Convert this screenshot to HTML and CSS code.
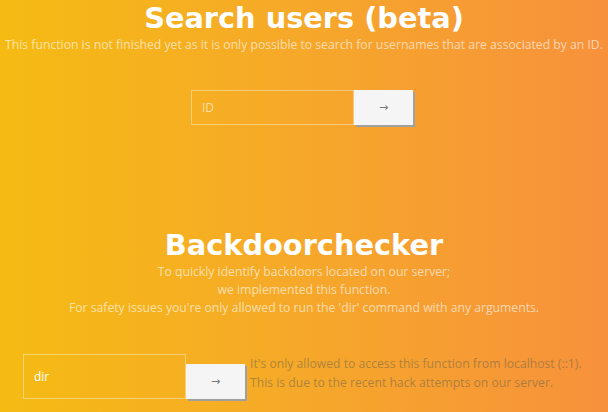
FILE: index.html
```html
<!DOCTYPE html>
<html>
<head>
<meta charset="utf-8">
<link rel="stylesheet" href="styles.css">
</head>
<body>
<main class="page">
  <section class="search">
    <h1 class="title">Search users (beta)</h1>
    <p class="desc">This function is not finished yet as it is only possible to search for usernames that are associated by an ID.</p>
    <form class="search-form">
      <input class="field" type="text" placeholder="ID">
      <button class="go" type="button">&rarr;</button>
    </form>
  </section>
  <section class="backdoor">
    <h1 class="title title-bd">Backdoorchecker</h1>
    <p class="desc desc-lines">To quickly identify backdoors located on our server;<br>we implemented this function.<br>For safety issues you're only allowed to run the 'dir' command with any arguments.</p>
    <div class="cmd-row">
      <input class="field field-tall" type="text" value="dir">
      <button class="go" type="button">&rarr;</button>
      <p class="note">It's only allowed to access this function from localhost (::1).<br>This is due to the recent hack attempts on our server.</p>
    </div>
  </section>
</main>
</body>
</html>
```
FILE: styles.css
```css
html, body {
  margin: 0;
  padding: 0;
  height: 100%;
}
body {
  background: linear-gradient(to right, #f5bb13 0%, #f6a82a 50%, #f7913c 100%);
  font-family: "Open Sans", "Noto Sans", sans-serif;
  overflow: hidden;
}
.page {
  width: 608px;
  height: 412px;
}
.search {
  text-align: center;
  padding-top: 0;
}
.title {
  margin: 0;
  font-family: "DejaVu Sans", sans-serif;
  font-weight: bold;
  font-size: 28.8px;
  line-height: 36px;
  color: #fff;
}
.desc {
  margin: 0;
  font-size: 12.2px;
  line-height: 18px;
  color: rgba(255, 255, 255, 0.62);
}
.search-form {
  display: flex;
  justify-content: center;
  margin-top: 36px;
  padding-right: 4px;
}
.field {
  box-sizing: border-box;
  width: 163px;
  height: 35px;
  margin: 0;
  padding: 0 10px;
  border: 1px solid rgba(255, 255, 255, 0.4);
  background: transparent;
  font-family: "Open Sans", sans-serif;
  font-size: 12px;
  color: #fff;
  outline: none;
}
.field::placeholder {
  color: rgba(255, 255, 255, 0.6);
}
.go {
  box-sizing: border-box;
  width: 59px;
  height: 35px;
  margin: 0;
  padding: 0;
  border: none;
  background: #f5f5f5;
  box-shadow: 2px 2px 0 #9fa0a2;
  color: #777;
  font-family: "DejaVu Sans", sans-serif;
  font-size: 11px;
}
.backdoor {
  text-align: center;
  margin-top: 102px;
}
.title-bd {
  line-height: 36px;
}
.desc-lines {
  margin-top: 0;
}
.cmd-row {
  display: flex;
  align-items: flex-end;
  margin-top: 37px;
  padding-left: 23px;
  text-align: left;
}
.field-tall {
  height: 45px;
}
.go + .note {
  margin: 0 0 0 5px;
  align-self: flex-start;
  font-size: 12.2px;
  line-height: 19px;
  color: rgba(110, 100, 70, 0.55);
}
```
